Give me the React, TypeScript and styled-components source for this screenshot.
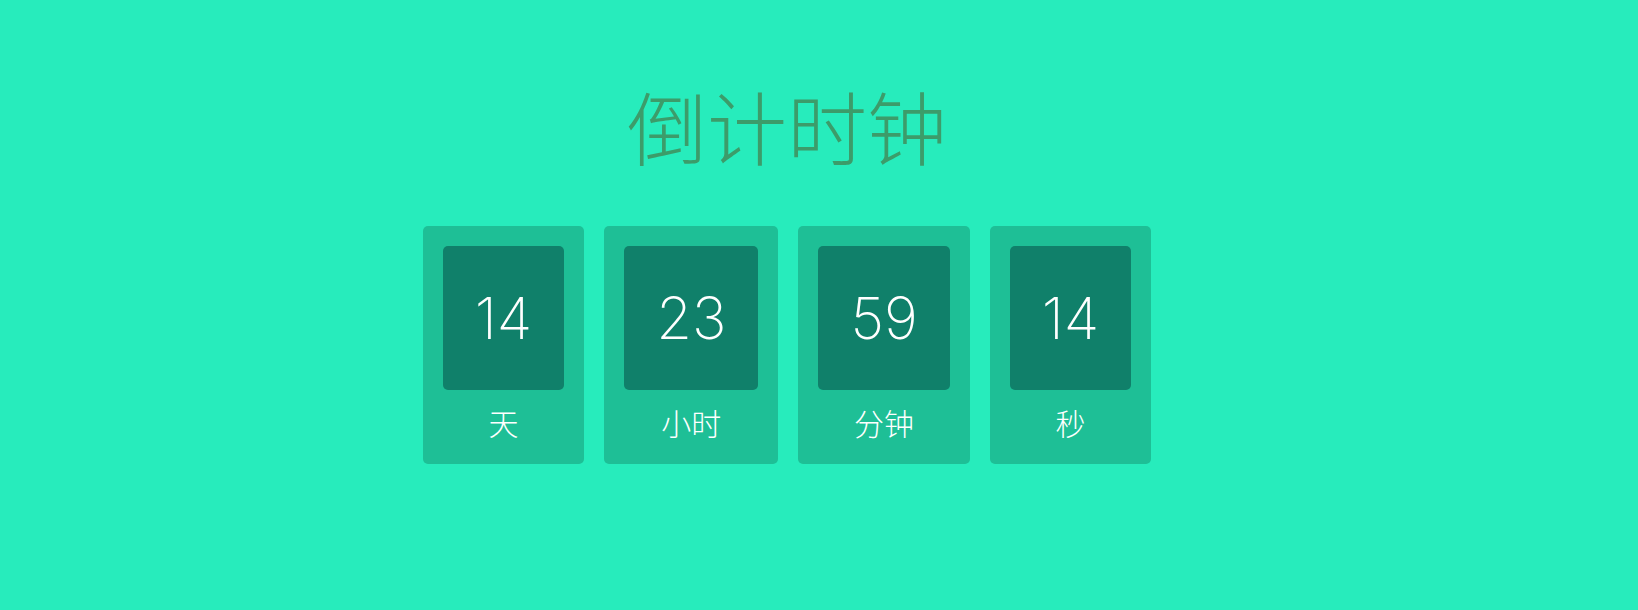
import React from "react";
import styled, { createGlobalStyle } from "styled-components";

const Global = createGlobalStyle`
  html, body { margin: 0; padding: 0; }
  body {
    background: #27ecbc;
    font-family: "Noto Sans CJK SC", "Noto Sans", sans-serif;
  }
`;

const Page = styled.div`
  height: 610px;
  box-sizing: border-box;
  padding-right: 64px;
  display: flex;
  flex-direction: column;
  align-items: center;
`;

const Title = styled.h1`
  margin: 84px 0 0;
  font-size: 80px;
  line-height: 80px;
  font-weight: 300;
  color: #3c9c6a;
  letter-spacing: 0;
`;

const Row = styled.div`
  margin-top: 62px;
  display: flex;
  gap: 20px;
`;

const Card = styled.div`
  background: #1ebf96;
  border-radius: 5px;
  padding: 20px 20px 0;
  height: 238px;
  box-sizing: border-box;
  display: flex;
  flex-direction: column;
  align-items: center;
`;

const Digits = styled.div`
  background: #10806a;
  border-radius: 5px;
  height: 144px;
  padding: 0 32px;
  display: flex;
  align-items: center;
  justify-content: center;
  color: #ffffff;
  font-family: "Inter", "Noto Sans", sans-serif;
  font-size: 58px;
  font-weight: 200;
  font-variant-numeric: proportional-nums;
  box-sizing: border-box;
`;

const Label = styled.div`
  flex: 1;
  display: flex;
  align-items: center;
  justify-content: center;
  color: #ffffff;
  font-size: 30px;
  font-weight: 300;
  padding-bottom: 10px;
`;

const units = [
  { value: "14", label: "天" },
  { value: "23", label: "小时" },
  { value: "59", label: "分钟" },
  { value: "14", label: "秒" },
];

export default function App() {
  return (
    <>
      <Global />
      <Page>
        <Title>倒计时钟</Title>
        <Row>
          {units.map((u, i) => (
            <Card key={i}>
              <Digits>{u.value}</Digits>
              <Label>{u.label}</Label>
            </Card>
          ))}
        </Row>
      </Page>
    </>
  );
}
